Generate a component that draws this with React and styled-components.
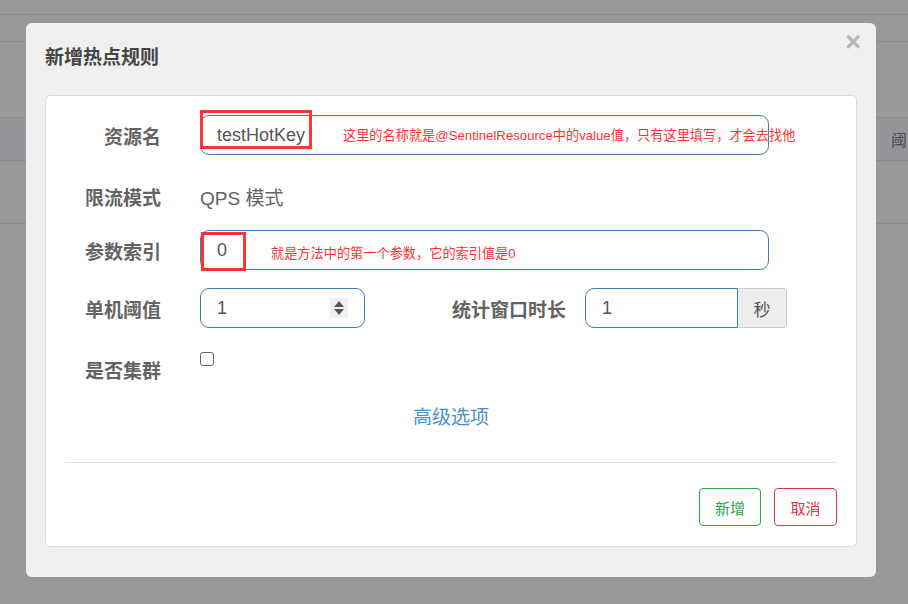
import React from "react";
import styled, { createGlobalStyle } from "styled-components";

const GlobalStyle = createGlobalStyle`
  html, body {
    margin: 0;
    padding: 0;
    background: #999;
    font-family: "Liberation Sans", "Noto Sans CJK SC", sans-serif;
  }
`;

const Page = styled.div`
  position: relative;
  width: 908px;
  height: 604px;
  overflow: hidden;
  background: #999;
`;

const PageLine = styled.div`
  height: ${(p) => p.$h}px;
  border-bottom: 1px solid #8a8a8a;
  background: ${(p) => p.$bg || "#999"};
  display: flex;
  align-items: center;
  justify-content: flex-end;
  color: #4a4a4a;
  font-size: 16px;
`;

const PageCell = styled.span`
  margin-right: 1px;
`;

const Modal = styled.div`
  position: absolute;
  left: 26px;
  top: 23px;
  width: 850px;
  height: 554px;
  box-sizing: border-box;
  background: #f0f0f0;
  border-radius: 6px;
  padding: 0 19px;
`;

const Header = styled.div`
  height: 72px;
  display: flex;
  align-items: center;
  justify-content: space-between;
  padding-bottom: 8px;
  box-sizing: border-box;
`;

const Title = styled.h4`
  margin: 0;
  font-size: 19px;
  font-weight: bold;
  color: #444;
`;

const Close = styled.span`
  font-size: 27px;
  font-weight: bold;
  color: #b8b8b8;
  line-height: 1;
  margin-right: -4px;
  margin-top: -26px;
`;

const Card = styled.div`
  background: #fff;
  border: 1px solid #dcdcdc;
  border-radius: 5px;
  padding: 19px 19px 20px;
`;

const Row = styled.div`
  display: grid;
  grid-template-columns: 96px 569px;
  column-gap: 39px;
  align-items: center;
  margin-top: ${(p) => p.$mt || 0}px;
  min-height: 40px;
`;

const Label = styled.label`
  text-align: right;
  font-size: 19px;
  font-weight: bold;
  color: #636363;
  padding-top: ${(p) => p.$pt ?? 1}px;
  white-space: nowrap;
`;

const Field = styled.div`
  position: relative;
  flex-shrink: 0;
  box-sizing: border-box;
  width: ${(p) => p.$w || 569}px;
  height: 40px;
  border: 1px solid #3a7fc0;
  border-radius: ${(p) => (p.$group ? "9px 0 0 9px" : "9px")};
  display: flex;
  align-items: center;
  padding-left: 16px;
  font-size: 18px;
  color: #555;
`;

const Note = styled.span`
  position: absolute;
  left: ${(p) => p.$left}px;
  top: ${(p) => p.$top}px;
  font-size: 13.2px;
  color: #ff3333;
  white-space: nowrap;
`;

const Mark = styled.div`
  position: absolute;
  left: ${(p) => p.$left}px;
  top: ${(p) => p.$top}px;
  width: ${(p) => p.$w}px;
  height: ${(p) => p.$h}px;
  box-sizing: border-box;
  border: 3px solid #f33;
`;

const Plain = styled.span`
  font-size: 19px;
  color: #636363;
`;

const Spinner = styled.div`
  position: absolute;
  right: 16px;
  top: 9px;
  width: 18px;
  height: 20px;
  background: #f0f0f0;
  display: flex;
  align-items: center;
  justify-content: center;
`;

const SplitRow = styled.div`
  display: flex;
  align-items: center;
`;

const SubLabel = styled(Label)`
  flex-shrink: 0;
  margin-left: 87px;
  margin-right: 19px;
`;

const Addon = styled.div`
  flex-shrink: 0;
  box-sizing: border-box;
  width: 49px;
  height: 40px;
  background: #eee;
  border: 1px solid #ccc;
  border-left: none;
  border-radius: 0 4px 4px 0;
  display: flex;
  align-items: center;
  justify-content: center;
  font-size: 17px;
  color: #555;
`;

const Check = styled.span`
  align-self: start;
  margin-top: 4px;
  width: 14px;
  height: 14px;
  box-sizing: border-box;
  border: 1px solid #666;
  border-radius: 3px;
`;

const Advanced = styled.div`
  margin-top: 16px;
  text-align: center;
  font-size: 19px;
  color: #4a8fcb;
  line-height: 28px;
`;

const Divider = styled.hr`
  margin: 30px 0 0;
  border: none;
  border-top: 1px solid #e3e3e3;
`;

const Footer = styled.div`
  display: flex;
  justify-content: flex-end;
  gap: 13px;
  margin-top: 25px;
`;

const Button = styled.button`
  height: 38px;
  width: ${(p) => p.$w}px;
  background: #fff;
  border: 1px solid ${(p) => p.$color};
  color: ${(p) => p.$color};
  border-radius: 4px;
  font-size: 15px;
  font-family: inherit;
  padding: 0;
`;

export default function App() {
  return (
    <>
      <GlobalStyle />
      <Page>
        <PageLine $h={14} />
        <PageLine $h={26} />
        <PageLine $h={75} $bg="#999" />
        <PageLine $h={42} $bg="#95969a">
          <PageCell>阈</PageCell>
        </PageLine>
        <PageLine $h={62} />

        <Modal>
          <Header>
            <Title>新增热点规则</Title>
            <Close>×</Close>
          </Header>
          <Card>
            <Row>
              <Label>资源名</Label>
              <Field>
                testHotKey
                <Mark $left={-1} $top={-6} $w={112} $h={39} />
                <Note $left={142} $top={9}>
                  这里的名称就是@SentinelResource中的value值，只有这里填写，才会去找他
                </Note>
              </Field>
            </Row>
            <Row $mt={21}>
              <Label>限流模式</Label>
              <Plain>QPS 模式</Plain>
            </Row>
            <Row $mt={14}>
              <Label>参数索引</Label>
              <Field>
                0
                <Mark $left={0} $top={1} $w={45} $h={39} />
                <Note $left={70} $top={12}>
                  就是方法中的第一个参数，它的索引值是0
                </Note>
              </Field>
            </Row>
            <Row $mt={18}>
              <Label>单机阈值</Label>
              <SplitRow>
                <Field $w={165}>
                  1
                  <Spinner>
                    <svg width="10" height="16" viewBox="0 0 10 16">
                      <path d="M5 1 L10 7 L0 7 Z" fill="#555" />
                      <path d="M0 9 L10 9 L5 15 Z" fill="#555" />
                    </svg>
                  </Spinner>
                </Field>
                <SubLabel>统计窗口时长</SubLabel>
                <Field $w={153} $group>
                  1
                </Field>
                <Addon>秒</Addon>
              </SplitRow>
            </Row>
            <Row $mt={20}>
              <Label $pt={3}>是否集群</Label>
              <Check />
            </Row>
            <Advanced>高级选项</Advanced>
            <Divider />
            <Footer>
              <Button $w={62} $color="#28a745">新增</Button>
              <Button $w={63} $color="#dc3545">取消</Button>
            </Footer>
          </Card>
        </Modal>
      </Page>
    </>
  );
}
